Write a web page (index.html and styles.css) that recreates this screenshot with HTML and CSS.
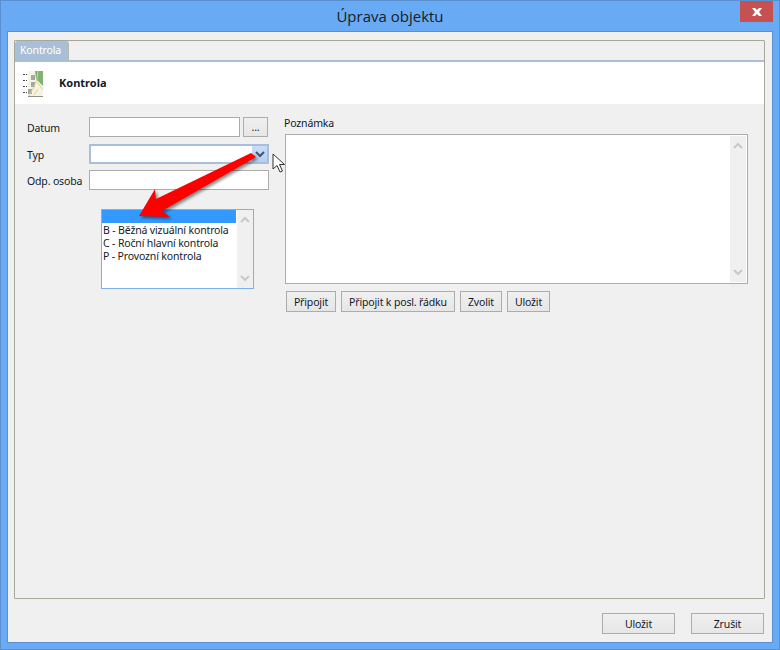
FILE: index.html
```html
<!DOCTYPE html>
<html lang="cs">
<head>
<meta charset="utf-8">
<title>Úprava objektu</title>
<link rel="stylesheet" href="styles.css">
</head>
<body>
<div class="window">
  <header class="titlebar">
    <h1 class="title">Úprava objektu</h1>
    <button class="close" aria-label="Zavřít">
      <svg width="10" height="8" viewBox="0 0 10 8"><path d="M0 0h3l2 2 2-2h3L7 4l3 4H7L5 6 3 8H0l3-4z" fill="#fff"/></svg>
    </button>
  </header>
  <main class="client">
    <section class="tabpane">
      <div class="tabstrip"><div class="tab">Kontrola</div></div>
      <div class="heading">
        <svg class="hicon" width="24" height="27" viewBox="0 0 24 27">
          <defs><filter id="soft"><feGaussianBlur stdDeviation="0.5"/></filter></defs>
          <path d="M6 1h15v25H6z" fill="#f3f4e6"/>
          <path d="M13 1h8v15l-4-4-3-3z" fill="#7fb274" filter="url(#soft)"/>
          <path d="M9 5h4v5H9zM9 12h4v5H9zM6 19h4v5H6z" fill="#a5a7a7"/>
          <path d="M7 26l5-9 3-8 1-8M15 12l6 8M12 25l4-6" stroke="#ded580" stroke-width="1" fill="none"/>
          <path d="M6 26.500h15" stroke="#8f9186" stroke-width="1"/>
          <path d="M1 4.500h4M1 10.500h4M1 16.500h4M1 22.500h4" stroke="#444" stroke-width="1" stroke-dasharray="2 1"/>
        </svg>
        <span class="heading-text">Kontrola</span>
      </div>
      <div class="form">
        <div class="left">
          <div class="row">
            <label class="lbl">Datum</label>
            <div class="input date"></div>
            <button class="btn dots">...</button>
          </div>
          <div class="row">
            <label class="lbl">Typ</label>
            <div class="combo"><span class="drop"><svg width="10" height="7" viewBox="0 0 10 7"><path d="M1 1l4 4 4-4" fill="none" stroke="#3d5674" stroke-width="2"/></svg></span></div>
          </div>
          <div class="row">
            <label class="lbl">Odp. osoba</label>
            <div class="input wide"></div>
          </div>
          <div class="list">
            <div class="items">
              <div class="item sel">&nbsp;</div>
              <div class="item">B - Běžná vizuální kontrola</div>
              <div class="item">C - Roční hlavní kontrola</div>
              <div class="item">P - Provozní kontrola</div>
            </div>
            <div class="sbar">
              <svg width="10" height="7" viewBox="0 0 10 7"><path d="M1 6l4-4 4 4" fill="none" stroke="#c9c9c9" stroke-width="2"/></svg>
              <svg width="10" height="7" viewBox="0 0 10 7"><path d="M1 1l4 4 4-4" fill="none" stroke="#c9c9c9" stroke-width="2"/></svg>
            </div>
          </div>
        </div>
        <div class="right">
          <label class="note-lbl">Poznámka</label>
          <div class="note">
            <div class="sbar note-sbar">
              <svg width="10" height="7" viewBox="0 0 10 7"><path d="M1 6l4-4 4 4" fill="none" stroke="#c9c9c9" stroke-width="2"/></svg>
              <svg width="10" height="7" viewBox="0 0 10 7"><path d="M1 1l4 4 4-4" fill="none" stroke="#c9c9c9" stroke-width="2"/></svg>
            </div>
          </div>
          <div class="actions">
            <button class="btn a1">Připojit</button>
            <button class="btn a2">Připojit k posl. řádku</button>
            <button class="btn a3">Zvolit</button>
            <button class="btn a4">Uložit</button>
          </div>
        </div>
      </div>
    </section>
    <footer class="footer">
      <button class="btn foot">Uložit</button>
      <button class="btn foot">Zrušit</button>
    </footer>
  </main>
  <svg class="overlay arrow" width="150" height="90" viewBox="0 0 150 90">
    <defs><filter id="sh" x="-10%" y="-10%" width="125%" height="130%"><feGaussianBlur stdDeviation="1.500"/></filter></defs>
    <path d="M9 76L25 49 26 59 121 13 126 17 32 71 40 77z" fill="#000" opacity=".45" filter="url(#sh)" transform="translate(2 2)"/>
    <path d="M9 76L25 49 26 59 121 13 126 17 32 71 40 77z" fill="#fe0000"/>
  </svg>
  <svg class="overlay cursor" width="16" height="22" viewBox="0 0 16 22">
    <path d="M1 1v15l4-3.500 3 6.500 2.500-1-3-6.500H12.500z" fill="#fff" stroke="#333" stroke-width="1"/>
  </svg>
</div>
</body>
</html>
```

FILE: styles.css
```css
* { box-sizing: border-box; }
html, body { margin: 0; padding: 0; }
body { width: 780px; height: 650px; overflow: hidden; font-family: "Noto Sans", sans-serif; font-size: 10.500px; letter-spacing: -0.15px; color: #111a2a; }
.window { position: relative; width: 780px; height: 650px; background: #69aaf5; border: 1px solid #5b8fcf; display: flex; flex-direction: column; padding: 0 6px 6px; }
.titlebar { height: 30px; display: flex; justify-content: center; align-items: center; position: relative; flex: none; }
.title { margin: 0; font: 400 15px/1 "Open Sans", sans-serif; letter-spacing: 0; color: #1b1b1b; padding-top: 1px; }
.close { position: absolute; top: 0; right: 0; width: 33px; height: 21px; background: #c75050; border: 0; padding: 0; display: flex; align-items: center; justify-content: center; }
.client { flex: 1; background: #f0f0f0; border: 1px solid #5b8fcf; padding: 8px 7px 7px 6px; display: flex; flex-direction: column; }
.tabpane { height: 559px; border: 1px solid #a8a89a; border-radius: 1px; display: flex; flex-direction: column; }
.tabstrip { flex: none; border-bottom: 2px solid #a9bfd8; background: #f0f0f0; height: 21px; }
.tab { width: 53px; height: 19px; background: #a9bfd8; color: #fff; border-radius: 3px 3px 0 0; padding-left: 5px; line-height: 19px; box-shadow: 1px 0 0 #b9b9a8; }
.heading { height: 42px; background: #fff; display: flex; align-items: center; flex: none; padding-left: 7px; }
.hicon { flex: none; }
.heading-text { margin: 0 0 1px 13px; font-weight: 700; font-size: 11px; letter-spacing: 0; }
.form { display: flex; padding: 13px 0 0 12px; flex: 1; }
.left { width: 257px; flex: none; }
.right { flex: 1; }
.row { display: flex; height: 20px; margin-bottom: 6px; align-items: center; }
.row:first-child { margin-bottom: 7px; }
.lbl { width: 62px; flex: none; padding-top: 2px; }
.input { height: 20px; background: #fff; border: 1px solid #acacac; }
.date { width: 151px; }
.wide { width: 180px; }
.combo { width: 180px; height: 20px; background: #fff; border: 2px solid #a9bfd8; display: flex; justify-content: flex-end; }
.drop { width: 15px; background: linear-gradient(#c9dbf7, #b9cff2); display: flex; align-items: center; justify-content: center; }
.btn { background: linear-gradient(#f0f0f0, #e6e6e6); border: 1px solid #acacac; padding: 0; font: inherit; letter-spacing: inherit; color: inherit; }
.dots { width: 25px; height: 20px; margin-left: 3px; }
.list { margin: 19px 0 0 74px; width: 153px; height: 80px; border: 1px solid #7db0e8; background: #fff; display: flex; }
.items { width: 134px; flex: none; }
.item { height: 13px; line-height: 13px; padding: 1px 0 0 1px; white-space: nowrap; }
.sel { background: #3399ff; }
.sbar { flex: none; width: 16px; margin-left: 1px; background: #f0f0f0; display: flex; flex-direction: column; justify-content: space-between; align-items: center; padding: 6px 0; }
.note-lbl { display: block; height: 18px; line-height: 15px; margin-top: -1px; }
.note { margin-left: 1px; width: 463px; height: 150px; background: #fff; border: 1px solid #acacac; padding: 1px; display: flex; justify-content: flex-end; }
.actions { display: flex; gap: 5px; margin: 7px 0 0 2px; }
.actions .btn { height: 21px; }
.a1 { width: 50px; }
.a2 { width: 114px; }
.a3 { width: 42px; }
.a4 { width: 43px; }
.footer { display: flex; justify-content: flex-end; gap: 16px; padding: 14px 1px 0 0; }
.foot { width: 73px; height: 21px; }
.overlay { position: absolute; }
.arrow { left: 129px; top: 139px; }
.cursor { left: 271px; top: 152px; }
```
